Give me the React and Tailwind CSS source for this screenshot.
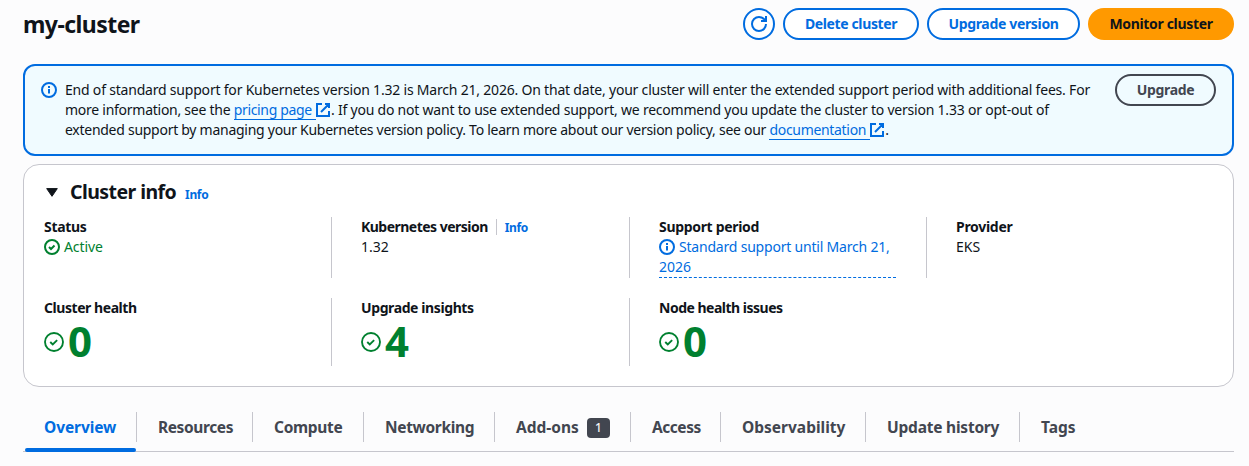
const Svg = ({ className = "size-4", w = 2, children }) => (
  <svg viewBox="0 0 16 16" className={className} fill="none" stroke="currentColor" strokeWidth={w} strokeLinejoin="round">
    {children}
  </svg>
);

const InfoIcon = ({ className }) => (
  <Svg className={className}>
    <circle cx="8" cy="8" r="7" />
    <path d="M8 11.5V7M8 6V4" />
  </Svg>
);

const CheckIcon = ({ className, w }) => (
  <Svg className={className} w={w}>
    <circle cx="8" cy="8" r={w ? 7.2 : 7} />
    <path d="m5 8 2 2 3.521-3.521" strokeLinejoin="miter" />
  </Svg>
);

const ExternalIcon = () => (
  <Svg className="inline-block size-4 align-[-3px]">
    <path strokeLinejoin="miter" d="M10 2h4v4M6 10l8-8M14 9.048V14H2V2h5" />
  </Svg>
);

const Button = ({ className, children }) => (
  <button className={`flex h-8 items-center justify-center rounded-full text-sm font-bold ${className}`}>{children}</button>
);

const Link = ({ className, children }) => (
  <a className="text-[#006ce0]">
    <span className={`border-b border-[#006ce0] ${className}`}>
      {children}
      <span className="pl-[4px]" />
    </span>
    <span className="-ml-px tracking-normal">
      <ExternalIcon />
    </span>
  </a>
);

const Field = ({ label, className = "", extra, children }) => (
  <div>
    <div className="flex h-5 items-center text-sm font-bold leading-5">
      <span className={className}>{label}</span>
      {extra}
    </div>
    {children}
  </div>
);

const Count = ({ value }) => (
  <div className="flex h-[48px] items-center text-[#00802f]">
    <CheckIcon className="size-5" w={1.5} />
    <span className="-mt-[3px] ml-1 text-[42px] font-bold leading-[48px]">{value}</span>
  </div>
);

const Tab = ({ width, className = "", last, children }) => (
  <div className={`flex h-[30px] items-center pl-[21px] ${width} ${last ? "" : "border-r border-[#c6c6cd]"}`}>
    <span className={`whitespace-nowrap ${className}`}>{children}</span>
  </div>
);

export default function App() {
  return (
    <main className="h-[466px] w-[1249px] overflow-hidden bg-[#fcfcfd] pl-[23px] pr-[15px] pt-2 font-['Noto_Sans',sans-serif] text-sm leading-5 text-[#0f141a]">
      <header className="flex h-8 items-center gap-2">
        <h1 className="mr-auto text-[23px] font-bold tracking-[-0.56px]">my-cluster</h1>
        <Button className="w-8 border-2 border-[#006ce0] bg-white text-[#006ce0]">
          <Svg className="size-4">
            <path d="M15 0v5l-5-.04" strokeLinejoin="miter" />
            <path d="M15 8c0 3.87-3.13 7-7 7s-7-3.13-7-7 3.13-7 7-7c2.79 0 5.2 1.63 6.33 4" />
          </Svg>
        </Button>
        <Button className="w-[136px] border-2 border-[#006ce0] bg-white tracking-[-0.37px] text-[#006ce0]">Delete cluster</Button>
        <Button className="w-[153px] border-2 border-[#006ce0] bg-white tracking-[-0.33px] text-[#006ce0]">Upgrade version</Button>
        <Button className="w-[146px] bg-[#ff9900] tracking-[-0.33px]">Monitor cluster</Button>
      </header>

      <section className="mt-6 flex h-[92px] rounded-xl border-2 border-[#006ce0] bg-[#f0fbff] pl-4 pr-4 pt-2">
        <InfoIcon className="mt-2 size-4 shrink-0 text-[#006ce0]" />
        <div className="ml-2 mt-[6px] whitespace-nowrap">
          <p className="tracking-[-0.203px]">
            End of standard support for Kubernetes version 1.32 is March 21, 2026. On that date, your cluster will enter the extended support period with additional fees. For
          </p>
          <p className="tracking-[-0.215px]">
            <span className="tracking-[-0.26px]">more information, see the </span>
            <Link className="tracking-[-0.33px]">pricing page</Link>. If you do not want to use extended support, we recommend you update the cluster to version 1.33 or opt-out of
          </p>
          <p className="tracking-[-0.27px]">
            extended support by managing your Kubernetes version policy. To learn more about our version policy, see our{" "}
            <Link className="tracking-[-0.32px]">documentation</Link>.
          </p>
        </div>
        <Button className="ml-auto w-[101px] border-2 border-[#424650] tracking-[-0.35px] text-[#424650]">Upgrade</Button>
      </section>

      <section className="mt-2 h-[223px] rounded-2xl border border-[#c6c6cd] bg-white px-5 pt-[15px]">
        <div className="flex h-6 items-center">
          <Svg className="size-4">
            <path d="M2.7 4.6h10.6L8 12.3z" fill="currentColor" strokeWidth="1" />
          </Svg>
          <h2 className="ml-[10px] text-[19.5px] font-bold leading-6 tracking-[-0.57px]">Cluster info</h2>
          <a className="ml-[9px] mt-[6px] text-xs font-bold tracking-[-0.35px] text-[#006ce0]">Info</a>
        </div>

        <div className="mt-[13px] grid grid-cols-[288px_298px_297px_1fr]">
          <div className="h-[61px] border-r border-[#c6c6cd]">
            <Field label="Status" className="tracking-[-0.3px]">
              <div className="flex items-center gap-1 tracking-[-0.1px] text-[#00802f]">
                <CheckIcon />
                Active
              </div>
            </Field>
          </div>
          <div className="h-[61px] border-r border-[#c6c6cd] pl-[29px]">
            <Field
              label="Kubernetes version"
              className="tracking-[-0.52px]"
              extra={
                <a className="ml-2 flex h-4 items-center border-l border-[#c6c6cd] pl-2 pt-0.5 text-xs tracking-[-0.35px] text-[#006ce0]">Info</a>
              }
            >
              1.32
            </Field>
          </div>
          <div className="h-[61px] border-r border-[#c6c6cd] pl-[29px]">
            <Field label="Support period" className="tracking-[-0.32px]">
              <div className="h-[41px] w-[237px] border-b border-dashed border-[#006ce0] tracking-[-0.2px] text-[#006ce0]">
                <InfoIcon className="mr-1 inline-block size-4 align-[-3px]" />
                Standard support until March 21, <span className="tracking-normal">2026</span>
              </div>
            </Field>
          </div>
          <div className="h-[61px] pl-[29px]">
            <Field label="Provider" className="tracking-[-0.29px]">EKS</Field>
          </div>
        </div>

        <div className="mt-5 grid grid-cols-[288px_298px_297px_1fr]">
          <div className="h-[68px] border-r border-[#c6c6cd]">
            <Field label="Cluster health" className="tracking-[-0.44px]">
              <Count value="0" />
            </Field>
          </div>
          <div className="h-[68px] border-r border-[#c6c6cd] pl-[29px]">
            <Field label="Upgrade insights" className="tracking-[-0.4px]">
              <Count value="4" />
            </Field>
          </div>
          <div className="h-[68px] pl-[29px]">
            <Field label="Node health issues" className="tracking-[-0.5px]">
              <Count value="0" />
            </Field>
          </div>
        </div>
      </section>

      <nav className="relative mt-[25px] flex h-10 border-b border-[#c6c6cd] text-[15.5px] font-bold text-[#424650]">
        <Tab width="w-[114px]" className="tracking-[-0.1px] text-[#006ce0]">Overview</Tab>
        <Tab width="w-[116px]" className="tracking-[-0.4px]">Resources</Tab>
        <Tab width="w-[111px]" className="tracking-[-0.3px]">Compute</Tab>
        <Tab width="w-[131px]" className="tracking-[-0.34px]">Networking</Tab>
        <Tab width="w-[136px]">
          <span className="flex items-center gap-2">
            <span className="-mt-px">Add-ons</span>
            <span className="mt-[2px] flex h-5 w-[23px] items-center justify-center rounded bg-[#424650] text-xs font-medium text-[#f3f3f7]">1</span>
          </span>
        </Tab>
        <Tab width="w-[90px]" className="tracking-[-0.45px]">Access</Tab>
        <Tab width="w-[145px]">Observability</Tab>
        <Tab width="w-[154px]" className="tracking-[-0.22px]">Update history</Tab>
        <Tab width="w-[80px]" last>Tags</Tab>
        <span className="absolute bottom-[-1px] left-[2px] h-1 w-[111px] rounded-full bg-[#006ce0]" />
      </nav>
    </main>
  );
}
